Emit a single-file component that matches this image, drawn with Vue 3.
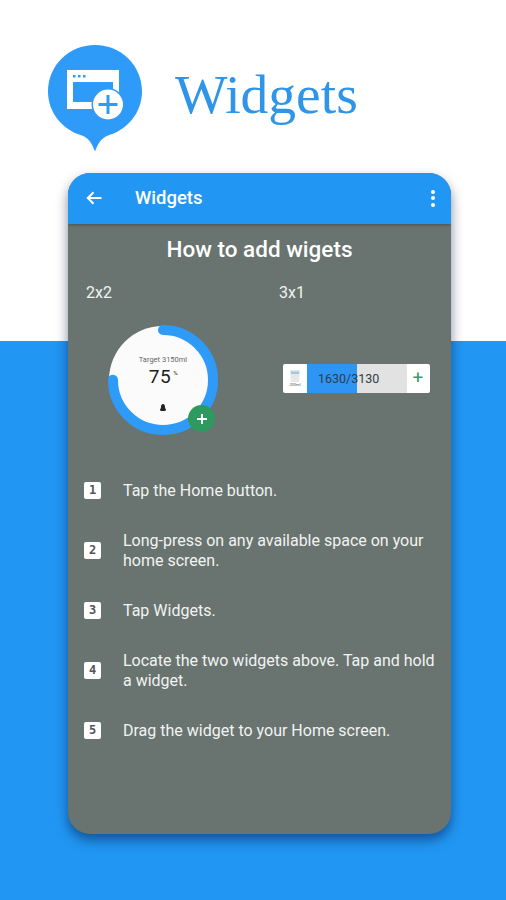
<script setup>
const steps = [
  { n: 1, lines: ['Tap the Home button.'] },
  { n: 2, lines: ['Long-press on any available space on your', 'home screen.'] },
  { n: 3, lines: ['Tap Widgets.'] },
  { n: 4, lines: ['Locate the two widgets above. Tap and hold', 'a widget.'] },
  { n: 5, lines: ['Drag the widget to your Home screen.'] },
]
</script>

<template>
  <div class="page">
    <header class="hero">
      <svg class="logo" width="94" height="108" viewBox="0 0 94 108">
        <path d="M47 0C21 0 0 20.500 0 46.500C0 68 15 85 34 90.500C40 92.500 44 98 47 106.500C50 98 54 92.500 60 90.500C79 85 94 68 94 46.500C94 20.500 73 0 47 0Z" fill="#2f9bf8" />
        <path d="M19 25H71V50H65V37H25V57H47V64H19Z" fill="#fff" />
        <rect x="25" y="30" width="2.500" height="2.500" fill="#2f9bf8" />
        <rect x="30" y="30" width="2.500" height="2.500" fill="#2f9bf8" />
        <rect x="35" y="30" width="2.500" height="2.500" fill="#2f9bf8" />
        <circle cx="60" cy="59.500" r="16.500" fill="#2f9bf8" />
        <circle cx="60" cy="59.500" r="15" fill="#fff" />
        <path d="M60 50V69M50.500 59.500H69.500" stroke="#2f9bf8" stroke-width="3" fill="none" />
      </svg>
      <h1 class="hero-title">Widgets</h1>
    </header>

    <main class="card">
      <div class="bar">
        <svg class="back" width="16" height="14" viewBox="0 0 16 14">
          <path d="M15.500 7H2M7.500 1.200L1.800 7L7.500 12.800" fill="none" stroke="#fff" stroke-width="2" />
        </svg>
        <span class="bar-title">Widgets</span>
        <span class="dots"><i></i><i></i><i></i></span>
      </div>

      <section class="body">
        <h2 class="how">How to add wigets</h2>

        <div class="sizes">
          <div class="size size-a">
            <span class="size-label">2x2</span>
            <div class="round">
              <svg class="ring" width="110" height="110" viewBox="0 0 110 110">
                <circle cx="55" cy="55" r="54" fill="#fbfbfb" />
                <circle cx="55" cy="55" r="50" fill="none" stroke="#2f9bf8" stroke-width="10" stroke-linecap="round" stroke-dasharray="235.600 314.200" transform="rotate(-90 55 55)" />
              </svg>
              <span class="target">Target 3150ml</span>
              <span class="pct">75<sup>%</sup></span>
              <svg class="drop" width="6" height="7" viewBox="0 0 6 7"><path d="M3 0C4.500 0 5 1.500 5 3C5 4.500 6 5 6 6C6 6.700 5 7 3 7C1 7 0 6.700 0 6C0 5 1 4.500 1 3C1 1.500 1.500 0 3 0Z" fill="#222" /></svg>
              <span class="add">
                <svg width="12" height="12" viewBox="0 0 12 12"><path d="M6 1V11M1 6H11" stroke="#fff" stroke-width="2" /></svg>
              </span>
            </div>
          </div>

          <div class="size size-b">
            <span class="size-label">3x1</span>
            <div class="strip">
              <div class="cup">
                <svg width="12" height="13" viewBox="0 0 12 13"><path d="M1 1H11L10 13H2Z" fill="#e8e8e8" /><rect x="2" y="2.500" width="8" height="2.500" fill="#9fc7ea" /></svg>
                <small>200ml</small>
              </div>
              <div class="meter">
                <span class="fill"></span>
                <span class="count">1630/3130</span>
              </div>
              <span class="plus">+</span>
            </div>
          </div>
        </div>

        <ol class="steps">
          <li v-for="s in steps" :key="s.n" class="step">
            <span class="num">{{ s.n }}</span>
            <p class="text"><span v-for="l in s.lines" :key="l" class="line">{{ l }}</span></p>
          </li>
        </ol>
      </section>
    </main>
  </div>
</template>

<style scoped>
.page {
  width: 506px;
  height: 900px;
  overflow: hidden;
  box-sizing: border-box;
  padding-top: 45px;
  background: linear-gradient(#fff 0, #fff 341px, #2196f3 341px, #2196f3 100%);
  font-family: Roboto, "Liberation Sans", sans-serif;
}
.hero {
  display: flex;
  align-items: flex-start;
  height: 128px;
  padding-left: 48px;
  box-sizing: border-box;
}
.logo { display: block; }
.hero-title {
  margin: 14px 0 0 33px;
  font-family: "Liberation Serif", serif;
  font-size: 55.500px;
  line-height: 72px;
  font-weight: 400;
  color: #2f95e8;
}
.card {
  width: 383px;
  height: 661px;
  margin-left: 68px;
  border-radius: 22px;
  overflow: hidden;
  background: #69736f;
  box-shadow: 0 6px 12px rgba(0, 20, 60, .5);
}
.bar {
  display: flex;
  align-items: center;
  height: 51px;
  padding: 0 16px 1px 18px;
  box-sizing: border-box;
  background: #2196f3;
  color: #fff;
  box-shadow: 0 1px 3px rgba(0, 0, 0, .3);
}
.back { flex: none; }
.bar-title {
  margin-left: 33px;
  font-size: 18.500px;
  font-weight: 500;
}
.dots {
  margin-left: auto;
  display: flex;
  flex-direction: column;
  gap: 2.500px;
}
.dots i {
  display: block;
  width: 4px;
  height: 4px;
  border-radius: 50%;
  background: #fff;
}
.body { color: #fff; }
.how {
  margin: 12px 0 0;
  text-align: center;
  font-size: 22.500px;
  line-height: 26px;
  font-weight: 500;
}
.sizes {
  display: flex;
  margin-top: 22px;
  height: 196px;
}
.size { position: relative; }
.size-a { width: 193px; padding-left: 18px; box-sizing: border-box; }
.size-label {
  display: block;
  font-size: 16px;
  line-height: 18px;
  color: #f1f3f2;
}
.round {
  position: relative;
  width: 110px;
  height: 110px;
  margin: 23px 0 0 22px;
}
.ring { display: block; }
.target {
  position: absolute;
  left: 0;
  right: 0;
  top: 30px;
  text-align: center;
  font-size: 7.500px;
  color: #666;
}
.pct {
  position: absolute;
  left: 1px;
  right: 0;
  top: 41px;
  text-align: center;
  font-size: 19px;
  line-height: 22px;
  letter-spacing: .5px;
  color: #1c1c1c;
}
.pct sup { font-size: 6px; margin-left: 2px; vertical-align: 8px; line-height: 0; }
.drop { position: absolute; left: 52px; top: 79px; }
.add {
  position: absolute;
  left: 80px;
  top: 80px;
  width: 27px;
  height: 27px;
  border-radius: 50%;
  background: #2e9a5f;
  display: flex;
  align-items: center;
  justify-content: center;
}
.strip {
  display: flex;
  width: 147px;
  height: 29px;
  margin: 62px 0 0 4px;
  border-radius: 2px;
  overflow: hidden;
  background: #fff;
}
.size-b { padding-left: 18px; }
.cup {
  width: 24px;
  flex: none;
  display: flex;
  flex-direction: column;
  align-items: center;
  padding-top: 5px;
  box-sizing: border-box;
}
.cup small { font-size: 4px; line-height: 6px; color: #555; }
.meter {
  position: relative;
  width: 100px;
  flex: none;
  background: #e2e2e2;
}
.fill {
  position: absolute;
  left: 0;
  top: 0;
  bottom: 0;
  width: 50px;
  background: #2f95f5;
}
.count {
  position: absolute;
  left: 11px;
  top: 0;
  font-size: 12.500px;
  line-height: 29px;
  color: #2f3c46;
}
.plus {
  flex: 1;
  text-align: center;
  font-size: 19px;
  line-height: 27px;
  color: #3f9a70;
  padding-right: 1px;
}
.steps {
  list-style: none;
  margin: 0;
  padding: 0 0 0 16px;
}
.step {
  display: flex;
  align-items: center;
  min-height: 20px;
  margin-bottom: 30px;
}
.num {
  flex: none;
  width: 17px;
  height: 17px;
  background: #fff;
  border-radius: 2px;
  color: #555;
  font-size: 12px;
  font-weight: 700;
  line-height: 17px;
  text-align: center;
  font-family: "DejaVu Sans Mono", monospace;
}
.text {
  margin: 1px 0 -1px 22px;
  font-size: 16px;
  line-height: 20px;
  color: #f1f3f2;
}
.line { display: block; white-space: nowrap; }
</style>
